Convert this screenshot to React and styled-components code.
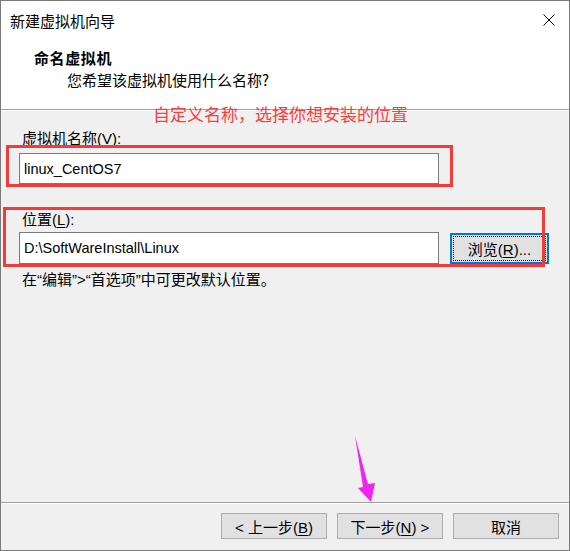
import React from 'react'
import styled, { createGlobalStyle } from 'styled-components'

const GlobalStyle = createGlobalStyle`
  html, body {
    margin: 0;
    padding: 0;
    background: #fff;
  }
  * { box-sizing: border-box; }
`

const FONT = `"Liberation Sans", "Noto Sans CJK SC", sans-serif`

const Window = styled.div`
  position: relative;
  width: 570px;
  height: 551px;
  display: flex;
  flex-direction: column;
  background: #f0f0f0;
  border: 1px solid #7a7a7a;
  font-family: ${FONT};
  font-size: 15px;
  color: #000;
  overflow: hidden;
`

const TitleBar = styled.div`
  height: 38px;
  display: flex;
  align-items: center;
  justify-content: space-between;
  padding: 0 14px 0 9px;
  background: #fff;
  font-family: "Noto Sans CJK SC", sans-serif;
`

const CloseBtn = styled.div`
  width: 12px;
  height: 12px;
  display: flex;
`

const Header = styled.div`
  height: 71px;
  background: #fff;
  display: flex;
  flex-direction: column;
  padding: 8px 0 0 33px;
  border-bottom: 1px solid #a0a0a0;
  box-shadow: 0 1px 0 #fff;
  font-family: "Noto Sans CJK SC", sans-serif;
`

const HeaderTitle = styled.div`
  height: 22px;
  line-height: 22px;
  font-weight: 700;
  letter-spacing: 0.6px;
`

const HeaderSub = styled.div`
  height: 22px;
  line-height: 22px;
  padding-left: 33px;
`

const Body = styled.div`
  flex: 1;
  display: flex;
  flex-direction: column;
  padding: 19px 0 0 18px;
`

const Label = styled.div`
  height: 20px;
  line-height: 20px;
  padding-left: 3px;
  margin-top: ${p => p.$top || 0}px;
`

const Key = styled.span`
  text-decoration: underline;
  text-underline-offset: 2px;
`

const Row = styled.div`
  display: flex;
  align-items: center;
  gap: 11px;
  margin-top: ${p => p.$top || 0}px;
`

const TextBox = styled.input`
  width: 420px;
  height: ${p => p.$h || 31}px;
  border: 1px solid #7a7a7a;
  background: #fff;
  padding: 0 0 0 4px;
  font-family: ${FONT};
  font-size: 14.5px;
  color: #000;
  outline: none;
`

const BrowseBtn = styled.button`
  width: 99px;
  height: 31px;
  background: #e1e1e1;
  border: 2px solid #0078d7;
  outline: 1px dotted #000;
  outline-offset: -4px;
  font-family: ${FONT};
  font-size: 15px;
  color: #000;
  padding: 0;
`

const Hint = styled.div`
  height: 20px;
  line-height: 20px;
  padding-left: 3px;
  margin-top: 6px;
`

const Footer = styled.div`
  height: 48px;
  display: flex;
  justify-content: flex-end;
  align-items: flex-start;
  gap: 10px;
  padding: 10px 10px 0 0;
  border-top: 1px solid #a0a0a0;
  box-shadow: inset 0 1px 0 #fff;
`

const NavBtn = styled.button`
  width: 106px;
  height: 26px;
  background: #e1e1e1;
  border: 1px solid #adadad;
  font-family: ${FONT};
  font-size: 15px;
  color: #000;
  padding: 0;
`

const Note = styled.div`
  position: absolute;
  left: 152px;
  top: 103px;
  line-height: 20px;
  font-family: "Noto Sans CJK SC", sans-serif;
  font-size: 17px;
  color: #ff3c3c;
  white-space: nowrap;
`

const Mark = styled.div`
  position: absolute;
  border: 3px solid #f53a3a;
  pointer-events: none;
`

const Arrow = styled.svg`
  position: absolute;
  left: 350px;
  top: 432px;
`

export default function App() {
  return (
    <>
      <GlobalStyle />
      <Window>
        <TitleBar>
          <span>新建虚拟机向导</span>
          <CloseBtn>
            <svg width="12" height="12" viewBox="0 0 12 12">
              <path d="M0.5 0.5 L11.5 11.5 M11.5 0.5 L0.5 11.5" stroke="#000" strokeWidth="1" />
            </svg>
          </CloseBtn>
        </TitleBar>
        <Header>
          <HeaderTitle>命名虚拟机</HeaderTitle>
          <HeaderSub>您希望该虚拟机使用什么名称?</HeaderSub>
        </Header>
        <Body>
          <Label>虚拟机名称(<Key>V</Key>):</Label>
          <Row $top={4}>
            <TextBox defaultValue="linux_CentOS7" />
          </Row>
          <Label $top={26}>位置(<Key>L</Key>):</Label>
          <Row $top={2}>
            <TextBox $h={32} defaultValue="D:\SoftWareInstall\Linux" />
            <BrowseBtn>浏览(<Key>R</Key>)...</BrowseBtn>
          </Row>
          <Hint>在“编辑”&gt;“首选项”中可更改默认位置。</Hint>
        </Body>
        <Footer>
          <NavBtn>&lt; 上一步(<Key>B</Key>)</NavBtn>
          <NavBtn>下一步(<Key>N</Key>) &gt;</NavBtn>
          <NavBtn>取消</NavBtn>
        </Footer>

        <Note>自定义名称，选择你想安装的位置</Note>
        <Mark style={{ left: 5, top: 144, width: 447, height: 42 }} />
        <Mark style={{ left: 2, top: 206, width: 542, height: 60 }} />
        <Arrow width="30" height="72" viewBox="350 432 30 72">
          <polygon points="354,435 367,483 374,482 370,501 357,487 362,486" fill="#f025f0" />
        </Arrow>
      </Window>
    </>
  )
}
